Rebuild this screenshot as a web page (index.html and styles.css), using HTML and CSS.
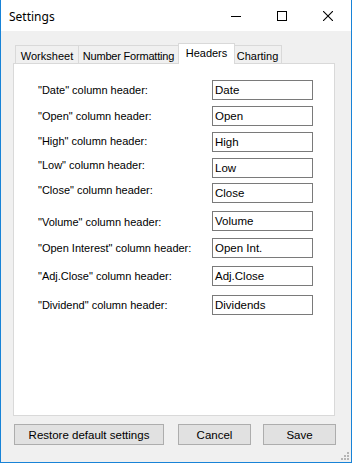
FILE: index.html
```html
<!DOCTYPE html>
<html>
<head>
<meta charset="utf-8">
<link rel="stylesheet" href="styles.css">
</head>
<body>
<div class="window">
  <div class="titlebar">
    <span class="title">Settings</span>
    <div class="controls">
      <div class="ctl"><svg width="10" height="10" viewBox="0 0 10 10"><rect x="0" y="5" width="10" height="1" fill="#000"/></svg></div>
      <div class="ctl"><svg width="10" height="10" viewBox="0 0 10 10"><rect x="0.5" y="0.5" width="9" height="9" fill="none" stroke="#000" stroke-width="1"/></svg></div>
      <div class="ctl"><svg width="10" height="10" viewBox="0 0 10 10"><path d="M0 0 L10 10 M10 0 L0 10" stroke="#000" stroke-width="1.1" fill="none"/></svg></div>
    </div>
  </div>
  <div class="client">
    <div class="tabs">
      <div class="tab t-ws">Worksheet</div>
      <div class="tab t-nf">Number Formatting</div>
      <div class="tab active t-hd">Headers</div>
      <div class="tab t-ch">Charting</div>
    </div>
    <div class="panel">
      <div class="form">
        <div class="row"><span class="lbl">"Date" column header:</span><span class="box">Date</span></div>
        <div class="row"><span class="lbl">"Open" column header:</span><span class="box">Open</span></div>
        <div class="row"><span class="lbl up1">"High" column header:</span><span class="box">High</span></div>
        <div class="row"><span class="lbl up3">"Low" column header:</span><span class="box">Low</span></div>
        <div class="row"><span class="lbl up3">"Close" column header:</span><span class="box">Close</span></div>
        <div class="row"><span class="lbl down1">"Volume" column header:</span><span class="box">Volume</span></div>
        <div class="row"><span class="lbl">"Open Interest" column header:</span><span class="box">Open Int.</span></div>
        <div class="row"><span class="lbl">"Adj.Close" column header:</span><span class="box">Adj.Close</span></div>
        <div class="row"><span class="lbl">"Dividend" column header:</span><span class="box">Dividends</span></div>
      </div>
    </div>
    <div class="buttons">
      <div class="btn restore">Restore default settings</div>
      <div class="btn cancel">Cancel</div>
      <div class="btn save">Save</div>
    </div>
  </div>
  <svg class="grip" width="9" height="9" viewBox="0 0 9 9">
    <rect x="6" y="0" width="2" height="2" fill="#b5b5b5"/>
    <rect x="3" y="3" width="2" height="2" fill="#b5b5b5"/>
    <rect x="6" y="3" width="2" height="2" fill="#b5b5b5"/>
    <rect x="0" y="6" width="2" height="2" fill="#b5b5b5"/>
    <rect x="3" y="6" width="2" height="2" fill="#b5b5b5"/>
    <rect x="6" y="6" width="2" height="2" fill="#b5b5b5"/>
  </svg>
</div>
</body>
</html>
```
FILE: styles.css
```css
html, body {
  margin: 0;
  padding: 0;
  background: #f0f0f0;
}
.window {
  position: relative;
  width: 352px;
  height: 463px;
  box-sizing: border-box;
  border: 1px solid #1883d7;
  border-top: none;
  background: #f0f0f0;
  font-family: "Liberation Sans", Arial, sans-serif;
  font-size: 11px;
  color: #000;
  display: flex;
  flex-direction: column;
}
.titlebar {
  height: 31px;
  background: #fff;
  display: flex;
  align-items: center;
  justify-content: space-between;
}
.title {
  font-family: "Noto Sans", "Open Sans", sans-serif;
  font-size: 12px;
  padding-left: 8px;
  padding-top: 1px;
}
.controls {
  display: flex;
  height: 31px;
}
.ctl {
  width: 46px;
  display: flex;
  align-items: center;
  justify-content: center;
  padding-top: 1px;
}
.client {
  flex: 1;
  padding: 12px 0 0 12px;
}
.tabs {
  display: flex;
  align-items: flex-end;
  padding-left: 2px;
  height: 20px;
  position: relative;
  z-index: 2;
}
.tab {
  height: 18px;
  box-sizing: border-box;
  border: 1px solid #d9d9d9;
  border-bottom: none;
  background: #f0f0f0;
  padding-top: 3px;
  margin-left: -1px;
  line-height: 14px;
  white-space: nowrap;
  text-align: center;
}
.tab:first-child {
  margin-left: 0;
}
.t-ws { width: 64px; }
.t-nf { width: 101px; letter-spacing: -0.2px; }
.t-hd { width: 57px; }
.t-ch { width: 49px; }
.tab.active {
  height: 21px;
  margin-bottom: -1px;
  background: #fff;
  padding-top: 2px;
  margin-right: -1px;
  position: relative;
  z-index: 3;
}
.panel {
  width: 322px;
  height: 353px;
  box-sizing: border-box;
  border: 1px solid #d9d9d9;
  background: #fff;
  position: relative;
  z-index: 1;
}
.form {
  padding: 16px 0 0 24px;
  display: flex;
  flex-direction: column;
}
.row {
  display: flex;
  align-items: center;
  height: 20px;
  margin-bottom: 6px;
}
.row:nth-child(4) { margin-bottom: 5px; }
.row:nth-child(5) { margin-bottom: 8px; }
.row:nth-child(6) { margin-bottom: 7px; }
.row:nth-child(7) { margin-bottom: 8px; }
.row:nth-child(8) { margin-bottom: 9px; }
.lbl {
  width: 174px;
  white-space: nowrap;
}
.up1 { margin-top: -3px; }
.up3 { margin-top: -7px; }
.down1 { margin-top: 2px; }
.box {
  width: 101px;
  height: 20px;
  box-sizing: border-box;
  border: 1px solid #7a7a7a;
  padding: 2px 0 0 2px;
  line-height: 15px;
  font-size: 11.5px;
}
.buttons {
  display: flex;
  margin-top: 8px;
  margin-left: 1px;
}
.btn {
  height: 21px;
  box-sizing: border-box;
  border: 1px solid #adadad;
  background: #e1e1e1;
  display: flex;
  align-items: center;
  justify-content: center;
  font-size: 11.5px;
}
.restore { width: 150px; }
.cancel { width: 73px; margin-left: 14px; }
.save { width: 73px; margin-left: 12px; }
.grip {
  position: absolute;
  right: 1px;
  bottom: 1px;
}
```
